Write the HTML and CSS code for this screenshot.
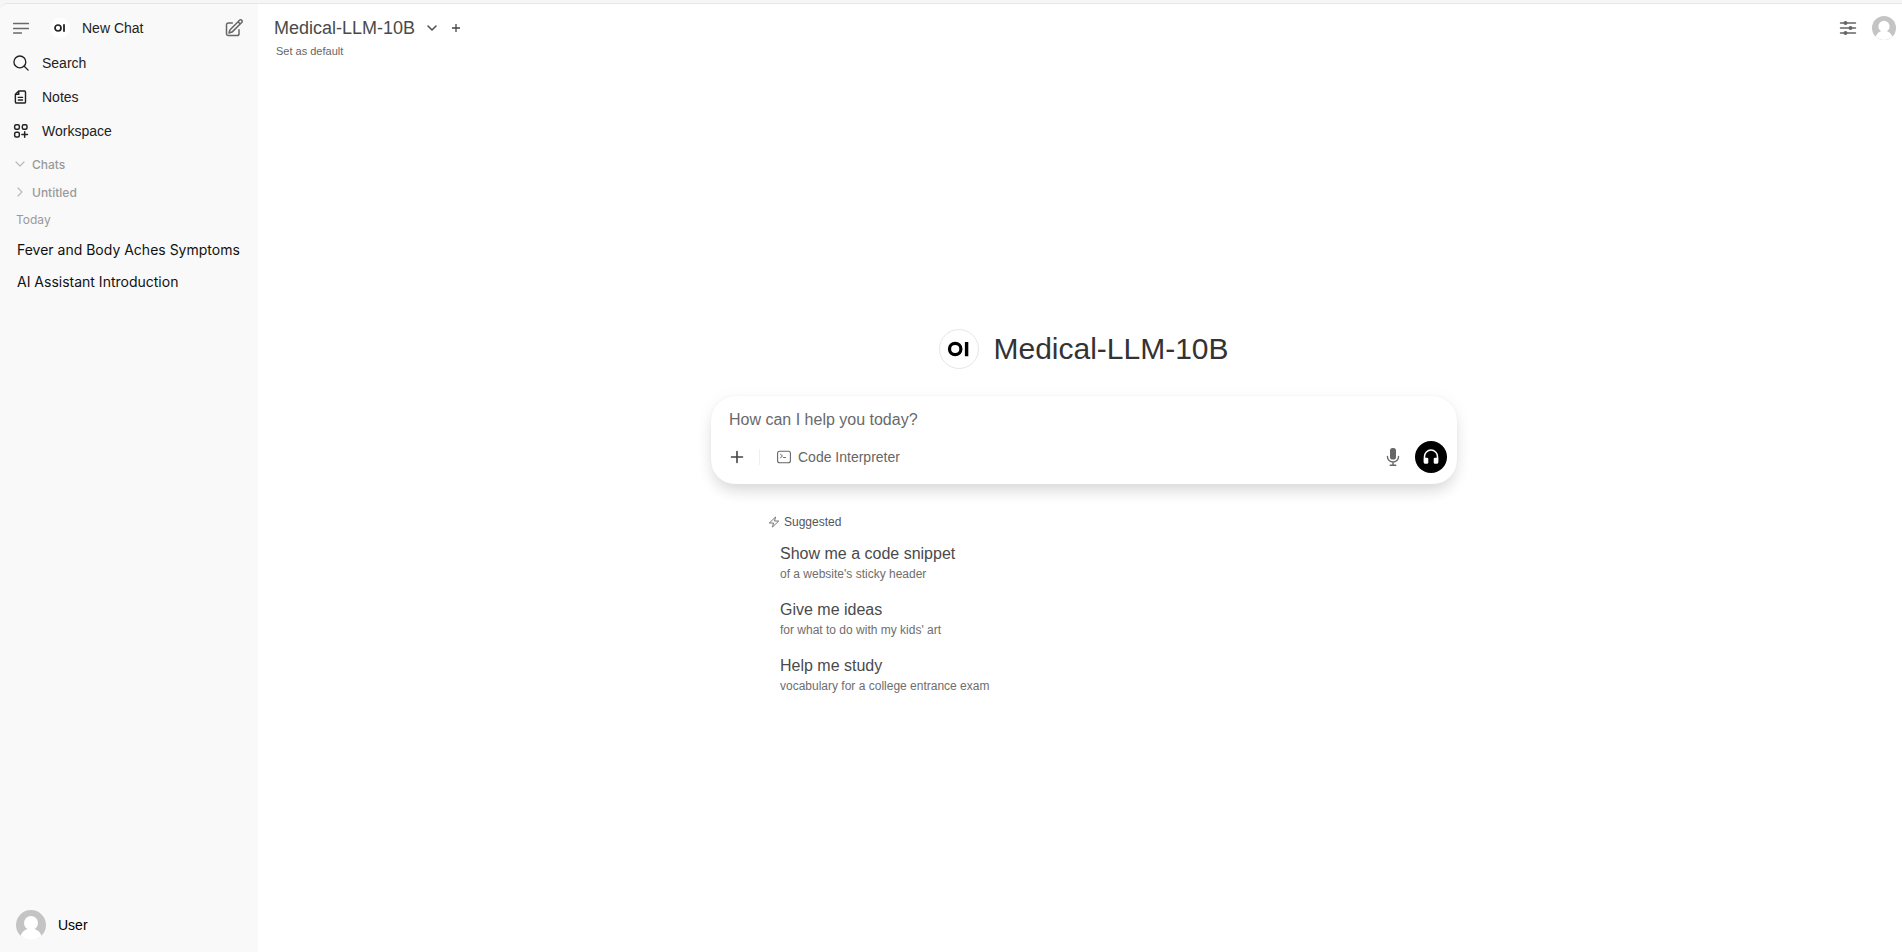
FILE: index.html
```html
<!DOCTYPE html>
<html lang="en">
<head>
<meta charset="utf-8">
<title>Medical-LLM-10B</title>
<link rel="stylesheet" href="styles.css">
</head>
<body>
<svg class="defs" width="0" height="0" aria-hidden="true">
  <symbol id="oi" viewBox="0 0 40 40">
    <circle cx="16" cy="20" r="6" fill="none" stroke="currentColor" stroke-width="3.4"/>
    <path d="M28 12.5v15" stroke="currentColor" stroke-width="3.6"/>
  </symbol>
  <symbol id="avatar" viewBox="0 0 30 30">
    <circle cx="15" cy="15" r="15" fill="#c4c4c4"/>
    <circle cx="15" cy="13" r="7" fill="#fff"/>
    <path d="M4.5 25.7C6.500 20.800 10.500 18.500 15 18.500s8.500 2.300 10.500 7.200A15 15 0 0 1 4.500 25.700Z" fill="#fff"/>
  </symbol>
</svg>
<div class="app">
  <aside class="sidebar">
    <div class="brand">
      <button class="icon-button" aria-label="Toggle sidebar">
        <svg width="18" height="18" viewBox="0 0 18 18" fill="none" stroke="#6a6a6a" stroke-width="1.700" stroke-linecap="round"><path d="M1.800 4.500h14.500M1.800 9.500h14.500M1.800 14h7.500"/></svg>
      </button>
      <a class="new-chat" href="#">
        <svg class="brand-logo"><use href="#oi"/></svg>
        <span>New Chat</span>
      </a>
      <button class="icon-button" aria-label="Start a new chat">
        <svg width="20" height="20" viewBox="0 0 24 24" fill="none" stroke="#666" stroke-width="1.800" stroke-linecap="round" stroke-linejoin="round"><path d="m16.860 4.490 1.690-1.690a1.880 1.880 0 1 1 2.650 2.650L10.580 16.070a4.500 4.500 0 0 1-1.900 1.130L6 18l.8-2.690a4.500 4.500 0 0 1 1.130-1.890l8.930-8.930Zm0 0L19.500 7.120M18 14v4.750A2.250 2.250 0 0 1 15.750 21H5.250A2.250 2.250 0 0 1 3 18.750V8.250A2.250 2.250 0 0 1 5.250 6H10"/></svg>
      </button>
    </div>
    <nav class="nav">
      <a href="#"><svg width="18" height="18" viewBox="0 0 24 24" fill="none" stroke="currentColor" stroke-width="1.800" stroke-linecap="round"><circle cx="10.500" cy="10.500" r="7.900"/><path d="m16.300 16.300 5.200 5.200"/></svg>Search</a>
      <a href="#"><svg width="18" height="18" viewBox="0 0 24 24" fill="none" stroke="currentColor" stroke-width="1.900" stroke-linecap="round" stroke-linejoin="round"><path d="M9 4h7.500A1.500 1.500 0 0 1 18 5.500v13a1.500 1.500 0 0 1-1.500 1.500H6a1.500 1.500 0 0 1-1.500-1.500V8.500L9 4v4.500H4.500M8.500 12.500h5.500M8.500 16h5.500"/></svg>Notes</a>
      <a href="#"><svg width="18" height="18" viewBox="-1 -1 27 27" fill="none" stroke="currentColor" stroke-width="2.200" stroke-linecap="round" stroke-linejoin="round"><rect x="3" y="3" width="7" height="7" rx="2.200"/><rect x="14.500" y="3" width="7" height="7" rx="2.200"/><rect x="3" y="14.500" width="7" height="7" rx="2.200"/><path d="M18 13.500v8.500M13.800 17.800h8.400"/></svg>Workspace</a>
    </nav>
    <section class="history">
      <button class="folder"><svg width="12" height="12" viewBox="0 0 12 12" fill="none" stroke="currentColor" stroke-width="1.200" stroke-linecap="round" stroke-linejoin="round"><path d="m2 4 4 4 4-4"/></svg>Chats</button>
      <button class="folder"><svg width="12" height="12" viewBox="0 0 12 12" fill="none" stroke="currentColor" stroke-width="1.200" stroke-linecap="round" stroke-linejoin="round"><path d="m4 2 4 4-4 4"/></svg>Untitled</button>
      <h2 class="period">Today</h2>
      <a class="chat" href="#">Fever and Body Aches Symptoms</a>
      <a class="chat" href="#">AI Assistant Introduction</a>
    </section>
    <button class="account"><svg class="account-avatar"><use href="#avatar"/></svg>User</button>
  </aside>
  <main class="main">
    <header class="topbar">
      <div class="model">
        <div class="model-row">
          <button class="model-name">Medical-LLM-10B
            <svg width="12" height="12" viewBox="0 0 12 12" fill="none" stroke="currentColor" stroke-width="1.500" stroke-linecap="round" stroke-linejoin="round"><path d="m2 4 4 4 4-4"/></svg></button>
          <button class="icon-button" aria-label="Add model"><svg width="10" height="10" viewBox="0 0 10 10" stroke="#444" stroke-width="1.300"><path d="M5 1v8M1 5h8"/></svg></button>
        </div>
        <button class="set-default">Set as default</button>
      </div>
      <div class="tools">
        <button class="icon-button" aria-label="Controls"><svg width="18" height="18" viewBox="0 0 18 18" fill="#666" stroke="#666" stroke-width="1.500" stroke-linecap="round"><path d="M1.500 4h15M1.500 9h15M1.500 14h15"/><g stroke="none"><circle cx="6.500" cy="4" r="2"/><circle cx="11.500" cy="9" r="2"/><circle cx="6.500" cy="14" r="2"/></g></svg></button>
        <button class="icon-button" aria-label="User menu"><svg class="user-avatar"><use href="#avatar"/></svg></button>
      </div>
    </header>
    <div class="welcome">
      <div class="hero"><svg class="hero-logo"><use href="#oi"/></svg><h1>Medical-LLM-10B</h1></div>
      <form class="composer">
        <textarea rows="1" placeholder="How can I help you today?" aria-label="Message"></textarea>
        <div class="actions">
          <button type="button" class="icon-button" aria-label="More"><svg width="14" height="14" viewBox="0 0 14 14" stroke="#444" stroke-width="1.600" stroke-linecap="round"><path d="M7 1.500v11M1.500 7h11"/></svg></button>
          <span class="divider"></span>
          <button type="button" class="interpreter"><svg width="14" height="14" viewBox="0 0 14 14" fill="none" stroke="currentColor" stroke-linecap="round" stroke-linejoin="round"><rect x=".600" y="1.200" width="12.800" height="11.600" rx="2" stroke-width="1.100"/><path d="m3.500 4.300 2 1.700-2 1.700M6.500 7.500h2"/></svg>Code Interpreter</button>
          <div class="voice">
            <button type="button" class="icon-button" aria-label="Dictate"><svg width="20" height="20" viewBox="0 0 20 20" fill="#666"><rect x="7" y="1" width="6" height="11.500" rx="2.600"/><path d="M4.500 9.500v.5a5.500 5 0 0 0 11 0v-.5M10 15v3M7.200 18.200h5.600" fill="none" stroke="#666" stroke-width="1.400" stroke-linecap="round"/></svg></button>
            <button type="button" class="call" aria-label="Voice mode"><svg width="18" height="18" viewBox="0 0 20 20" fill="#fff"><path d="M2.800 16V9.500a7.200 7.200 0 0 1 14.400 0V16" fill="none" stroke="#fff" stroke-width="1.700"/><path d="M2 10.700h3.500a1.500 1.500 0 0 1 1.500 1.500V16a1.500 1.500 0 0 1-1.500 1.500H3.500A1.500 1.500 0 0 1 2 16ZM18 10.700h-3.500a1.500 1.500 0 0 0-1.500 1.500V16a1.500 1.500 0 0 0 1.500 1.500h2A1.500 1.500 0 0 0 18 16Z"/></svg></button>
          </div>
        </div>
      </form>
      <section class="suggestions">
        <h2><svg width="12" height="12" viewBox="0 0 12 12" fill="none" stroke="currentColor" stroke-width=".8" stroke-linejoin="round"><path d="M7.500 1 1.300 7H5.500L4.500 11l6.200-6H6.500Z"/></svg>Suggested</h2>
        <button class="prompt"><strong>Show me a code snippet</strong><small>of a website's sticky header</small></button>
        <button class="prompt"><strong>Give me ideas</strong><small>for what to do with my kids' art</small></button>
        <button class="prompt"><strong>Help me study</strong><small>vocabulary for a college entrance exam</small></button>
      </section>
    </div>
  </main>
</div>
</body>
</html>
```
FILE: styles.css
```css
* { box-sizing: border-box; }
body {
  margin: 0;
  padding-top: 3px;
  background: #f6f6f6;
  font-family: "Liberation Sans", Arial, sans-serif;
  font-size: 14px;
  color: #222;
}
button { border: 0; padding: 0; background: none; font: inherit; color: inherit; text-align: left; }
a { color: inherit; text-decoration: none; }
h1, h2 { margin: 0; font-weight: 400; }
svg { display: block; flex: none; }
.defs { position: absolute; }
.icon-button { display: flex; }

.app {
  display: flex;
  min-height: calc(100vh - 3px);
  border-top: 1px solid #e6e6e6;
  border-top-left-radius: 8px;
  background: #fff;
  overflow: hidden;
}

.sidebar { width: 258px; flex: none; display: flex; flex-direction: column; background: #f9f9f9; }
.brand { display: flex; align-items: center; height: 36px; margin-top: 6px; padding: 0 14px 0 12px; }
.new-chat { display: flex; align-items: center; gap: 12px; flex: 1; margin-left: 20px; }
.brand-logo { width: 20px; height: 20px; border-radius: 50%; background: #fff; }
.nav { margin-bottom: 2px; }
.nav a { display: flex; align-items: center; gap: 12px; height: 34px; padding-left: 12px; }

.history { display: flex; flex-direction: column; font-family: Inter, sans-serif; }
.folder, .period { display: flex; align-items: center; height: 28px; font-size: 12px; font-weight: 500; color: #999; }
.folder { gap: 6px; padding-left: 14px; }
.folder svg { color: #bbb; }
.period { height: 26px; padding-left: 16px; font-weight: 400; }
.chat { padding: 0 17px; line-height: 32px; white-space: nowrap; color: #111; }
.history .period { margin-bottom: 2px; }
.account { display: flex; align-items: center; gap: 12px; margin-top: auto; padding: 12px 16px; color: #000; }
.account-avatar { width: 30px; height: 30px; }

.main { flex: 1; display: flex; flex-direction: column; }
.topbar { display: flex; justify-content: space-between; padding: 12px 6px 0 16px; }
.model-row { display: flex; align-items: center; gap: 13px; height: 24px; }
.model-name { display: flex; align-items: center; gap: 11px; font-size: 18px; color: #4a4a4a; }
.set-default { display: block; margin: 3px 0 0 2px; font-size: 11px; line-height: 16px; color: #666; }
.tools { display: flex; align-items: center; gap: 15px; height: 24px; }
.user-avatar { width: 24px; height: 24px; }

.welcome { flex: 1; display: flex; flex-direction: column; align-items: center; justify-content: center; padding: 25px 0 0 8px; }
.hero { display: flex; align-items: center; gap: 14px; color: #000; }
.hero-logo { width: 40px; height: 40px; border: 1px solid #e6e6e6; border-radius: 50%; background: #fff; }
.hero h1 { font-size: 30px; line-height: 36px; color: #333; }
.composer {
  width: 100%;
  max-width: 746px;
  margin-top: 27px;
  padding: 14px 10px 11px;
  border-radius: 24px;
  background: #fff;
  box-shadow: 0 0 1px #e0e0e0, 0 10px 15px -3px #0000001a, 0 4px 20px -4px #0000001a;
}
textarea { display: block; width: 100%; height: 22px; border: 0; padding: 0 8px; outline: 0; resize: none; background: none; font: 16px/20px "Liberation Sans", Arial, sans-serif; }
textarea::placeholder { color: #6a6a6a; }
.actions { display: flex; align-items: center; height: 32px; margin-top: 9px; padding-left: 9px; }
.divider { width: 1px; height: 16px; margin: 0 17px 0 15px; background: #f0f0f0; }
.interpreter { display: flex; align-items: center; gap: 7px; color: #666; }
.voice { display: flex; align-items: center; gap: 12px; margin-left: auto; }
.call { display: flex; align-items: center; justify-content: center; width: 32px; height: 32px; border-radius: 50%; background: #000; }

.suggestions { width: 100%; max-width: 632px; margin-top: 30px; }
.suggestions h2 { display: flex; align-items: center; gap: 4px; margin-bottom: 9px; font-size: 12px; line-height: 16px; color: #555; }
.prompt { display: flex; flex-direction: column; width: 100%; height: 56px; padding: 3px 12px 0; }
.prompt strong { font-size: 16px; font-weight: 400; line-height: 24px; color: #4a4a4a; }
.prompt small { font-size: 12px; line-height: 16px; color: #6e6e6e; }
```
